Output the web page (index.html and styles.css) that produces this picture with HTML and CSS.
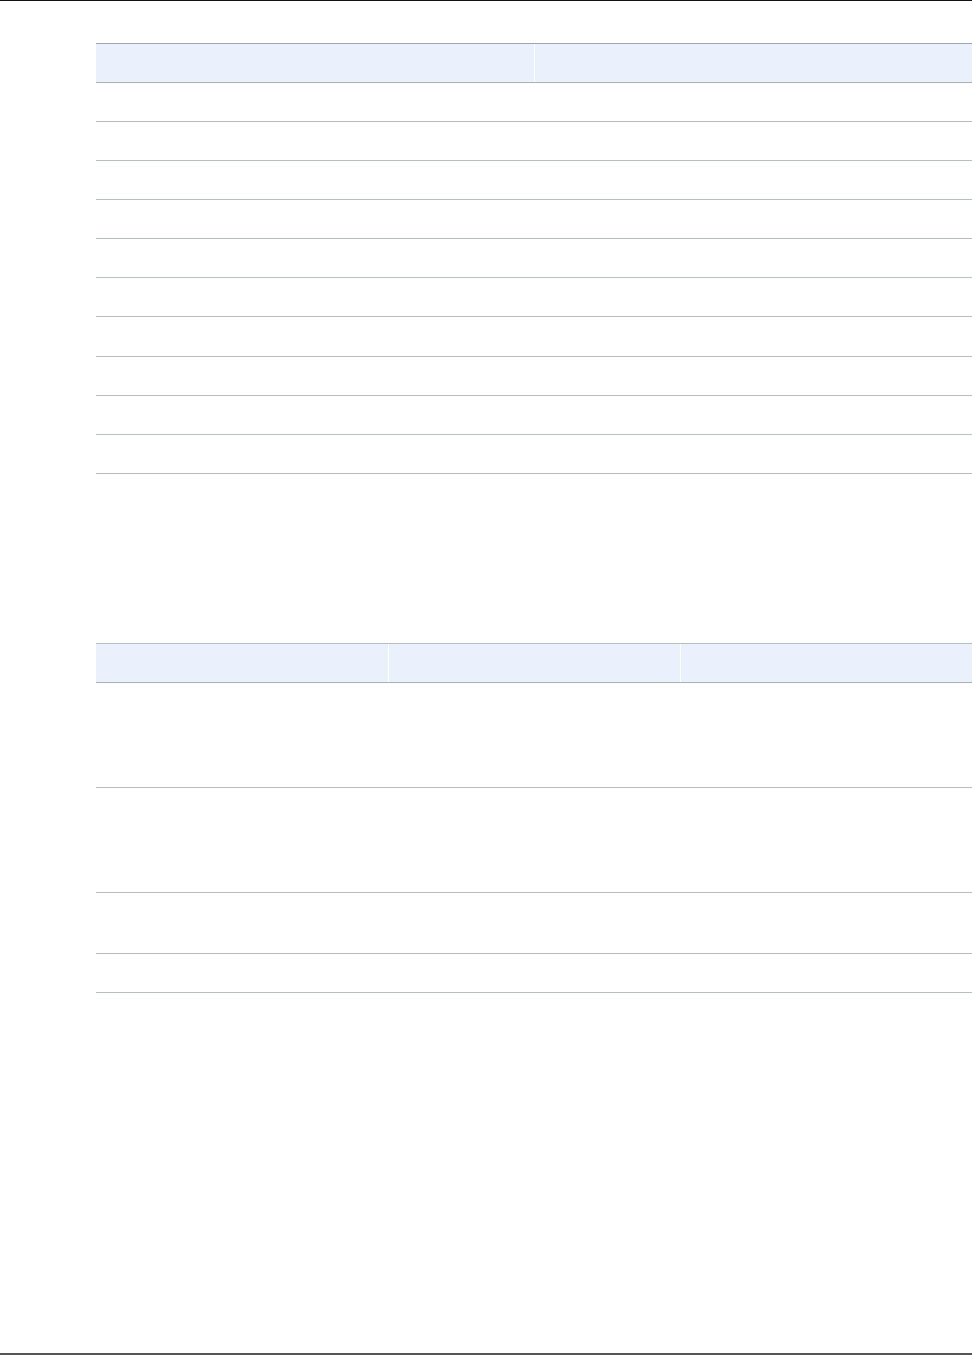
FILE: index.html
```html
<!DOCTYPE html>
<html lang="en">
  <head>
    <meta charset="utf-8" />
    <meta name="viewport" content="width=device-width, initial-scale=1.0" />
    <title>Tables</title>
    <link rel="stylesheet" href="styles.css">
  </head>

  <body>
    <div class="page">
      <table class="grid two-col">
        <thead>
          <tr><th></th><th></th></tr>
        </thead>
        <tbody>
          <tr><td></td><td></td></tr>
          <tr><td></td><td></td></tr>
          <tr><td></td><td></td></tr>
          <tr><td></td><td></td></tr>
          <tr><td></td><td></td></tr>
          <tr><td></td><td></td></tr>
          <tr class="plus"><td></td><td></td></tr>
          <tr><td></td><td></td></tr>
          <tr><td></td><td></td></tr>
          <tr><td></td><td></td></tr>
        </tbody>
      </table>

      <table class="grid three-col">
        <thead>
          <tr><th></th><th></th><th></th></tr>
        </thead>
        <tbody>
          <tr class="tall"><td></td><td></td><td></td></tr>
          <tr class="tall"><td></td><td></td><td></td></tr>
          <tr class="mid"><td></td><td></td><td></td></tr>
          <tr><td></td><td></td><td></td></tr>
        </tbody>
      </table>
    </div>
  </body>
</html>
```

FILE: styles.css
```css
body {
  margin: 0;
  font-family: "Liberation Sans", Arial, sans-serif;
  background-color: #fff;
}

.page {
  box-sizing: border-box;
  height: 1355px;
  border-top: 1px solid #111;
  border-bottom: 2px solid #555;
  padding: 42px 0 0 96px;
}

.grid {
  width: 876px;
  border-collapse: collapse;
  table-layout: fixed;
}

.grid th {
  height: 38px;
  padding: 0;
  background-color: #eaf1fc;
  border-top: 1px solid #9ea9a9;
  border-bottom: 1px solid #a7b4b4;
}

.grid th + th {
  border-left: 1px solid #fff;
}

.grid td {
  height: 38px;
  padding: 0;
  border-bottom: 1px solid #b3c0c0;
}

.two-col tr.plus td {
  height: 39px;
}

.three-col {
  margin-top: 169px;
}

.three-col th {
  border-top-color: #b6bdbd;
}

.three-col tr.tall td {
  height: 104px;
}

.three-col tr.mid td {
  height: 60px;
}
```
